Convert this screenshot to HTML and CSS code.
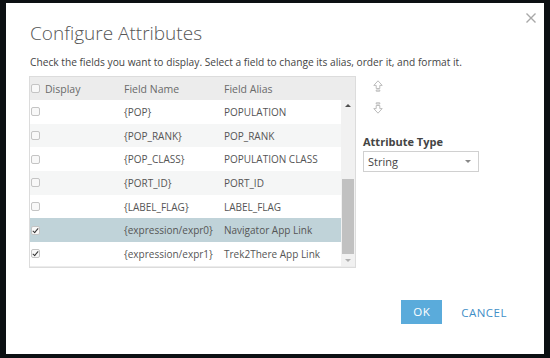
FILE: index.html
```html
<!DOCTYPE html>
<html lang="en">
<head>
    <meta charset="UTF-8">
    <title>Configure Attributes</title>
    <link rel="stylesheet" href="styles.css">
</head>
<body>
    <div class="dialog">
        <svg class="close" width="10" height="10" viewBox="0 0 10 10">
            <path d="M0.5 0.5L9.5 9.5M9.5 0.5L0.5 9.5" stroke="#a8a8a8" stroke-width="1.4" fill="none"/>
        </svg>
        <h1 class="title">Configure Attributes</h1>
        <p class="desc">Check the fields you want to display. Select a field to change its alias, order it, and format it.</p>
        <div class="content">
            <div class="grid">
                <div class="head">
                    <div class="c1"><span class="cb"></span>Display</div>
                    <div class="c2">Field Name</div>
                    <div class="c3">Field Alias</div>
                </div>
                <div class="body">
                    <div class="rows">
                        <div class="row"><div class="c1"><span class="cb"></span></div><div class="c2">{POP}</div><div class="c3">POPULATION</div></div>
                        <div class="row alt"><div class="c1"><span class="cb"></span></div><div class="c2">{POP_RANK}</div><div class="c3">POP_RANK</div></div>
                        <div class="row"><div class="c1"><span class="cb"></span></div><div class="c2">{POP_CLASS}</div><div class="c3">POPULATION CLASS</div></div>
                        <div class="row alt"><div class="c1"><span class="cb"></span></div><div class="c2">{PORT_ID}</div><div class="c3">PORT_ID</div></div>
                        <div class="row"><div class="c1"><span class="cb"></span></div><div class="c2">{LABEL_FLAG}</div><div class="c3">LABEL_FLAG</div></div>
                        <div class="row sel"><div class="c1"><span class="cb on"></span></div><div class="c2">{expression/expr0}</div><div class="c3">Navigator App Link</div></div>
                        <div class="row"><div class="c1"><span class="cb on"></span></div><div class="c2">{expression/expr1}</div><div class="c3">Trek2There App Link</div></div>
                    </div>
                    <div class="scroll">
                        <span class="tri up"></span>
                        <div class="track"><div class="thumb"></div></div>
                        <span class="tri down"></span>
                    </div>
                </div>
            </div>
            <div class="side">
                <div class="moves">
                    <svg width="10" height="12" viewBox="0 0 10 12"><path d="M5 0.8L9.2 5.4H6.8V8.5H3.2V5.4H0.8Z M3.2 10H6.8V11.2H3.2Z" fill="none" stroke="#bcbcbc" stroke-width="1"/></svg>
                    <svg width="10" height="12" viewBox="0 0 10 12"><path d="M3.2 0.8H6.8V2H3.2Z M3.2 3.5H6.8V6.6H9.2L5 11.2L0.8 6.6H3.2Z" fill="none" stroke="#bcbcbc" stroke-width="1"/></svg>
                </div>
                <div class="label">Attribute Type</div>
                <div class="select">String<span class="caret"></span></div>
            </div>
        </div>
        <div class="foot">
            <span class="btn ok">OK</span>
            <span class="btn cancel">CANCEL</span>
        </div>
    </div>
</body>
</html>
```

FILE: styles.css
```css
*{
    margin: 0;
    padding: 0;
    box-sizing: border-box;
}
body{
    background-color: #0c1013;
    font-family: "Open Sans", "Liberation Sans", sans-serif;
    color: #4c4c4c;
}
.dialog{
    position: relative;
    width: 538px;
    height: 351px;
    margin: 3px 0 0 6px;
    padding: 16px 0 0 23px;
    background-color: #fff;
}
.close{
    position: absolute;
    top: 10px;
    right: 8px;
}
.title{
    margin-left: 1px;
    font-size: 19px;
    font-weight: 300;
    line-height: 28px;
    color: #555;
}
.desc{
    margin: 8px 0 0 1px;
    font-size: 10.2px;
    line-height: 14px;
    color: #444;
}
.content{
    display: flex;
    gap: 7px;
    margin-top: 7px;
}
.grid{
    width: 327px;
    height: 192px;
    border: 1px solid #dcdcdc;
    background-color: #ececec;
    font-size: 10px;
}
.head{
    display: flex;
    height: 23px;
    align-items: center;
    color: #6a6a6a;
    font-size: 10.5px;
}
.c1{
    display: flex;
    align-items: center;
    width: 94px;
    padding-left: 1px;
}
.c2{
    width: 100px;
}
.c3{
    flex: 1;
}
.head .cb{
    margin-right: 5px;
}
.body{
    display: flex;
    height: 166px;
}
.rows{
    flex: 1;
}
.row{
    display: flex;
    align-items: center;
    height: 23.7px;
    background-color: #fff;
    color: #555;
}
.row.alt{
    background-color: #f5f6f6;
}
.row.sel{
    background-color: #c0d3d9;
}
.cb{
    position: relative;
    display: inline-block;
    width: 9px;
    height: 9px;
    border: 1px solid #c4c4c4;
    border-radius: 2px;
    background-color: #f8f8f8;
}
.cb.on::after{
    content: "";
    position: absolute;
    left: 2px;
    top: 0;
    width: 2px;
    height: 5px;
    border: solid #333;
    border-width: 0 1.5px 1.5px 0;
    transform: rotate(40deg);
}
.scroll{
    display: flex;
    flex-direction: column;
    align-items: center;
    width: 14px;
    background-color: #f1f1f1;
}
.tri{
    width: 0;
    height: 0;
    margin: 4px 0;
    border-left: 3px solid transparent;
    border-right: 3px solid transparent;
}
.tri.up{
    border-bottom: 3px solid #505050;
}
.tri.down{
    border-top: 3px solid #b0b0b0;
}
.track{
    flex: 1;
    width: 100%;
}
.thumb{
    width: 12px;
    height: 75px;
    margin: 68px auto 0;
    background-color: #c1c1c1;
}
.moves{
    display: flex;
    flex-direction: column;
    gap: 10px;
    padding: 4px 0 0 10px;
}
.label{
    margin-top: 20px;
    font-size: 11px;
    font-weight: bold;
    color: #444;
}
.select{
    position: relative;
    width: 116px;
    height: 21px;
    margin-top: 2px;
    padding-left: 4px;
    border: 1px solid #d0d0d0;
    font-size: 11px;
    line-height: 19px;
    color: #444;
}
.caret{
    position: absolute;
    right: 7px;
    top: 8px;
    border-left: 3px solid transparent;
    border-right: 3px solid transparent;
    border-top: 3px solid #888;
}
.foot{
    display: flex;
    align-items: center;
    justify-content: flex-end;
    gap: 19px;
    margin-top: 32px;
    padding-right: 37px;
}
.btn{
    font-size: 11.5px;
    letter-spacing: 0.5px;
}
.ok{
    width: 41px;
    height: 24px;
    line-height: 24px;
    text-align: center;
    color: #fff;
    background-color: #5aabdb;
}
.cancel{
    color: #3f8fc7;
}
```
